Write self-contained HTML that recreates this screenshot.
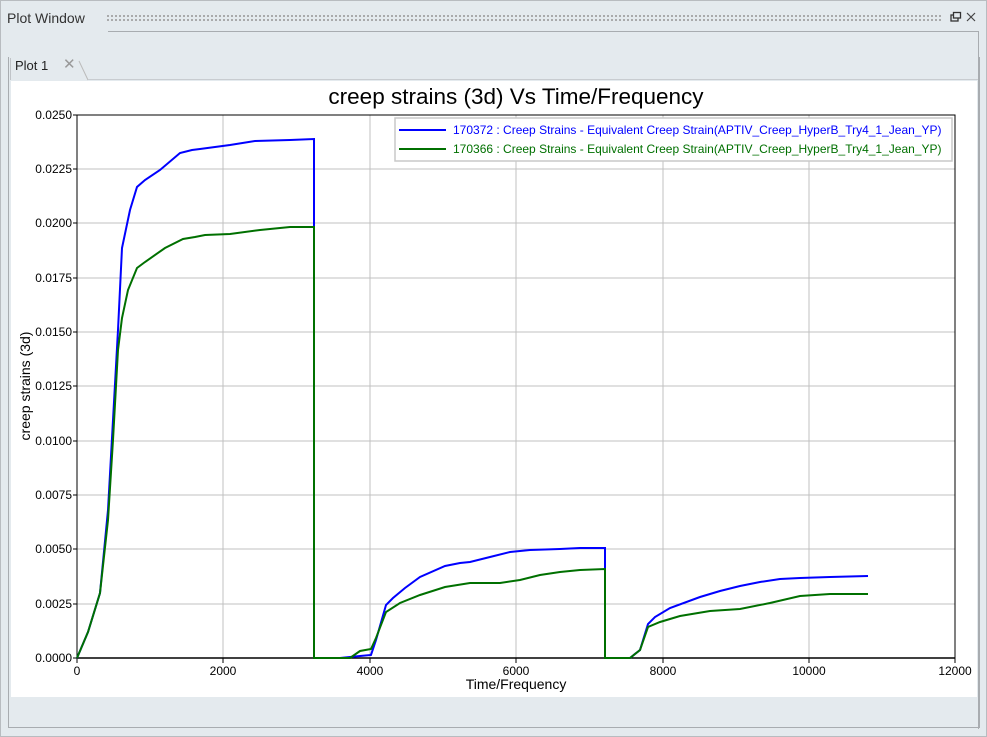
<!DOCTYPE html>
<html><head><meta charset="utf-8"><style>
body{margin:0;width:987px;height:737px;background:#e4eaee;font-family:"Liberation Sans",Arial,sans-serif;overflow:hidden;position:relative}
.win{position:absolute;left:0;top:0;width:985px;height:735px;border:1px solid #b8bcc0;background:#e4eaee}
</style></head><body>
<div class="win"></div>
<div style="position:absolute;left:7px;top:10px;font-size:14px;color:#333">Plot Window</div>
<div style="position:absolute;left:106px;top:14px;width:836px;height:8px;background-image:radial-gradient(circle,#9a9a9a 0.9px,transparent 1.1px);background-size:4px 4px"></div>
<div style="position:absolute;left:108px;top:31px;width:870px;height:697px;border-top:1px solid #a8acb0;border-right:1px solid #a8acb0;"></div>
<div style="position:absolute;left:8px;top:57px;width:970px;height:670px;border:1px solid #a8acb0;border-top:none"></div>
<svg style="position:absolute;left:949px;top:11px" width="30" height="14"><rect x="2" y="4" width="7" height="6" fill="none" stroke="#333" stroke-width="1.3"/><rect x="4.5" y="1.5" width="7" height="5.5" fill="#e4eaee" stroke="#333" stroke-width="1.3"/><path d="M18 2 L26 10 M26 2 L18 10" stroke="#444" stroke-width="1.2"/></svg>
<div style="position:absolute;left:10px;top:58px;width:68px;height:22px;border-left:1px solid #c0c4c8"></div>
<div style="position:absolute;left:15px;top:58px;font-size:13px;color:#222">Plot 1</div>
<div style="position:absolute;left:63px;top:55px;font-size:15px;color:#999">✕</div>
<svg style="position:absolute;left:78px;top:60px" width="12" height="21"><path d="M1 1 L10 20" stroke="#bbb"/></svg>
<div style="position:absolute;left:88px;top:79px;width:890px;height:1px;background:#c8ccd0"></div>
<div style="position:absolute;left:11px;top:81px;width:966px;height:616px;background:#fff"></div>
<svg style="position:absolute;left:0;top:0" width="987" height="737" font-family="Liberation Sans,Arial,sans-serif">
<text x="516" y="104" font-size="22.5" text-anchor="middle" fill="#000">creep strains (3d) Vs Time/Frequency</text>
<g stroke="#c0c0c0" stroke-width="1">
<path d="M223 115V658M370 115V658M516 115V658M663 115V658M809 115V658"/>
<path d="M77 169H955M77 223H955M77 278H955M77 332H955M77 386H955M77 441H955M77 495H955M77 549H955M77 604H955"/>
</g>
<rect x="77" y="115" width="878" height="543" fill="none" stroke="#000" stroke-width="1"/>
<path d="M77 658H955" stroke="#000" stroke-width="1.5"/>
<g stroke="#000"><path d="M73 115h4M73 169h4M73 223h4M73 278h4M73 332h4M73 386h4M73 441h4M73 495h4M73 549h4M73 604h4M73 658h4M77 658v5M223 658v5M370 658v5M516 658v5M663 658v5M809 658v5M955 658v5"/></g>
<g font-size="12" fill="#000" text-anchor="end">
<text x="72" y="119">0.0250</text><text x="72" y="173">0.0225</text><text x="72" y="227">0.0200</text><text x="72" y="282">0.0175</text><text x="72" y="336">0.0150</text><text x="72" y="390">0.0125</text><text x="72" y="445">0.0100</text><text x="72" y="499">0.0075</text><text x="72" y="553">0.0050</text><text x="72" y="608">0.0025</text><text x="72" y="662">0.0000</text>
</g>
<g font-size="12" fill="#000" text-anchor="middle">
<text x="77" y="675">0</text><text x="223" y="675">2000</text><text x="370" y="675">4000</text><text x="516" y="675">6000</text><text x="663" y="675">8000</text><text x="809" y="675">10000</text><text x="955" y="675">12000</text>
</g>
<text x="516" y="689" font-size="14" text-anchor="middle">Time/Frequency</text>
<text transform="translate(30 386) rotate(-90)" font-size="14" text-anchor="middle">creep strains (3d)</text>
<polyline fill="none" stroke="#0000ff" stroke-width="2" points="77,658 88,632 100,593 108,510 113,420 118,330 122,248 130,210 137,187 145,180 160,170 180,153 192,150 200,149 230,145 255,141 290,140 314,139 314,658 340,658 360,656 371,655 376,640 386,605 393,598 405,588 420,577 445,566 460,563 470,562 490,557 510,552 530,550 560,549 580,548 605,548 605,658 630,658 640,650 648,624 655,617 670,608 700,597 720,591 740,586 760,582 780,579 800,578 830,577 868,576"/>
<polyline fill="none" stroke="#007000" stroke-width="2" points="77,658 88,632 100,593 108,520 113,440 118,350 122,318 128,290 137,268 145,262 165,248 183,239 195,237 205,235 230,234 260,230 290,227 314,227 314,658 350,658 360,651 371,649 376,638 386,612 400,603 420,595 445,587 470,583 500,583 520,580 540,575 560,572 580,570 605,569 605,658 630,658 640,650 648,627 660,622 680,616 710,611 740,609 770,603 800,596 830,594 868,594"/>
<rect x="395" y="118" width="557" height="43" fill="#fff" stroke="#c8c8c8" stroke-width="1.5"/>
<path d="M399 130H446" stroke="#0000ff" stroke-width="2"/>
<path d="M399 149H446" stroke="#007000" stroke-width="2"/>
<text x="453" y="134" font-size="12" fill="#0000ff">170372 : Creep Strains - Equivalent Creep Strain(APTIV_Creep_HyperB_Try4_1_Jean_YP)</text>
<text x="453" y="153" font-size="12" fill="#007000">170366 : Creep Strains - Equivalent Creep Strain(APTIV_Creep_HyperB_Try4_1_Jean_YP)</text>
</svg>
</body></html>
